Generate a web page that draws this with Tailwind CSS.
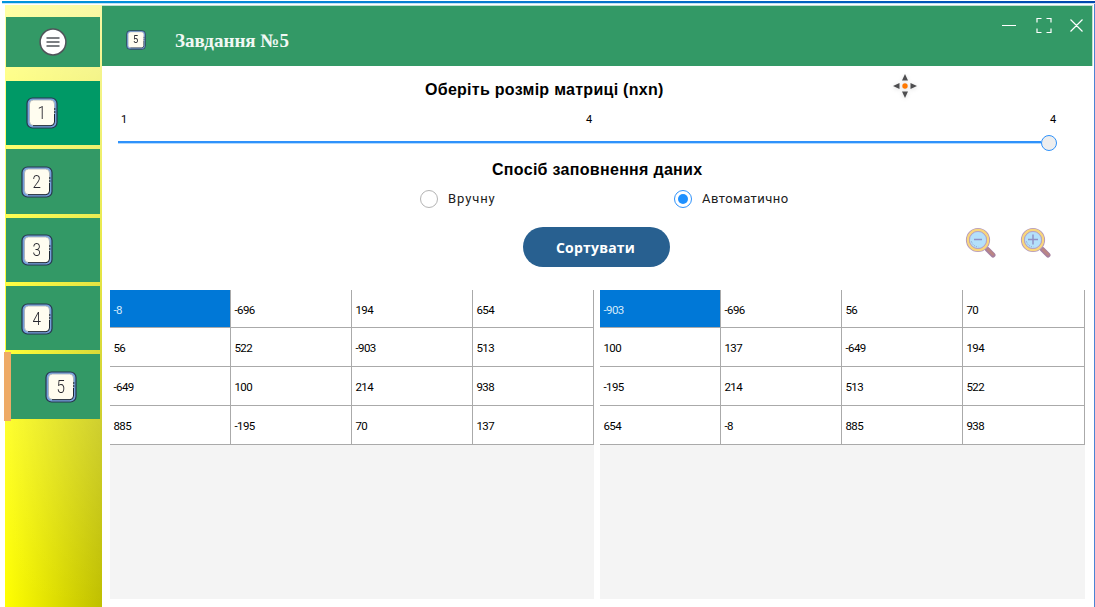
<!DOCTYPE html>
<html lang="uk">
<head>
<meta charset="utf-8">
<title>Завдання №5</title>
<script src="https://cdn.jsdelivr.net/npm/@tailwindcss/browser@4"></script>
</head>
<body class="w-[1095px] h-[607px] overflow-hidden bg-white font-['Roboto',sans-serif] text-black">
<svg class="hidden">
  <symbol id="key" viewBox="0 0 32 32">
    <rect x="1" y="1" width="30" height="30" rx="5.5" fill="#75a0dc" stroke="#27374d" stroke-width="1.2"/>
    <rect x="3.500" y="3" width="25" height="25.5" rx="4" fill="#fffdf0" stroke="#a4adb4" stroke-width=".8"/>
    <path d="M7 28.7h18q3.300-.3 3.500-3.500V17" fill="none" stroke="#1c2631" stroke-width="1"/>
    <path d="M28.800 11v6" stroke="#1c2631" stroke-width="1" stroke-dasharray="2 1"/>
  </symbol>
  <symbol id="lens" viewBox="0 0 32 32">
    <path d="M20.5 20.5l2.500 2.500" stroke="#9a7fae" stroke-width="3"/>
    <path d="M22.500 22.500l5.500 5.500" stroke="#a680a0" stroke-width="5" stroke-linecap="round"/>
    <path d="M23 22.500l5 5" stroke="#bb8583" stroke-width="2.500" stroke-linecap="round"/>
    <circle cx="13" cy="13" r="10.300" fill="#b4e0fa" stroke="#b297bf" stroke-width="3.600"/>
    <circle cx="13" cy="13" r="10.100" fill="none" stroke="#f8d67c" stroke-width="2.200"/>
    <circle cx="13" cy="13" r="8.500" fill="none" stroke="#b097c0" stroke-width=".6"/>
    <path d="M6.500 14.500q1.500 5 7 5.500" fill="none" stroke="#8499c6" stroke-dasharray="1 1.300"/>
  </symbol>
</svg>
<div class="flex flex-col h-full ml-0.5 pt-px">
  <div class="h-[2px] shrink-0 bg-linear-to-r from-[#0095dc] via-[#0878cc] to-[#0047ac]"></div>
  <div class="h-px shrink-0 bg-[#c5e3f5]"></div>
  <div class="flex flex-1 min-h-0 pl-[3px] pt-px border-r border-[#4c83d3]">
    <nav class="w-[97px] shrink-0 flex flex-col bg-[linear-gradient(to_bottom,rgba(255,255,185,0.9),rgba(255,255,110,0.65)_40%,rgba(255,255,200,0.23)_70%,rgba(255,255,0,0)),linear-gradient(to_right,#ffff00,#bfbf00)] pt-3 pl-px pr-0.5">
      <button class="h-[50px] shrink-0 bg-[#339966] flex items-center justify-center">
        <svg class="size-7" viewBox="0 0 28 28"><circle cx="14" cy="14" r="12.900" fill="#fff" stroke="#50545a" stroke-width="1.500"/><path d="M7.500 10h13M7.500 14h13M7.500 18h13" stroke="#50545a" stroke-width="1.500"/></svg>
      </button>
      <button class="mt-3.5 h-16 shrink-0 bg-[#009966] flex items-center pl-5">
        <span class="relative size-8"><svg class="size-8"><use href="#key"/></svg><span class="absolute inset-0 pr-px text-center leading-[31px] text-[19px] font-light text-[#292930] scale-x-80">1</span></span>
      </button>
      <button class="mt-1 h-[65px] shrink-0 bg-[#339966] flex items-center pl-[15px]">
        <span class="relative size-8"><svg class="size-8"><use href="#key"/></svg><span class="absolute inset-0 pr-px text-center leading-[31px] text-[19px] font-light text-[#292930] scale-x-80">2</span></span>
      </button>
      <button class="mt-1 h-[64px] shrink-0 bg-[#339966] flex items-center pl-[15px]">
        <span class="relative size-8"><svg class="size-8"><use href="#key"/></svg><span class="absolute inset-0 pr-px text-center leading-[31px] text-[19px] font-light text-[#292930] scale-x-80">3</span></span>
      </button>
      <button class="mt-1 h-[64px] shrink-0 bg-[#339966] flex items-center pl-[15px] pt-px">
        <span class="relative size-8"><svg class="size-8"><use href="#key"/></svg><span class="absolute inset-0 pr-px text-center leading-[31px] text-[19px] font-light text-[#292930] scale-x-80">4</span></span>
      </button>
      <div class="mt-0.5 -ml-[2px] h-[69px] shrink-0 flex">
        <span class="w-[7px] bg-[#eeaa66]"></span>
        <button class="mt-0.5 h-[65px] flex-1 bg-[#339966] flex items-center pl-[34px]">
          <span class="relative size-8"><svg class="size-8"><use href="#key"/></svg><span class="absolute inset-0 pr-px text-center leading-[31px] text-[19px] font-light text-[#292930] scale-x-80">5</span></span>
        </button>
      </div>
    </nav>
    <main class="flex-1 flex flex-col min-w-0 pr-px">
      <header class="h-[61px] shrink-0 bg-[#339966] border-t border-r border-[#c4dfcf] flex items-start text-white">
        <span class="relative size-5 ml-6 mt-[24px]"><svg class="size-5"><use href="#key"/></svg><span class="absolute inset-0 pr-px text-center leading-[19px] text-[11px] text-[#292930] scale-x-85">5</span></span>
        <h1 class="ml-[29px] mt-[23px] w-[114px] whitespace-nowrap font-['Liberation_Serif',serif] font-bold text-[19px] leading-6 text-[#f1f8f4]">Завдання №5</h1>
        <svg class="ml-auto mr-[8px] mt-[9px] w-[84px] h-5" viewBox="0 0 84 20" fill="none" stroke="#fff" stroke-width="1.200"><path d="M2 10.500h14M37 7.500V3.500h4.500M46.500 3.500H51v4M51 13.500v4h-4.500M41.500 17.500H37v-4M70.500 4.500l12 12M82.500 4.500l-12 12"/></svg>
      </header>
      <section class="h-[224px] shrink-0 flex flex-col">
        <div class="relative h-[48px] flex items-start">
          <h2 class="ml-[323px] mt-[12px] whitespace-nowrap font-['Liberation_Sans',sans-serif] font-bold text-base leading-6 tracking-[0.28px]">Оберіть розмір матриці (nxn)</h2>
          <svg class="absolute left-[789px] top-[6px] size-7 drop-shadow-sm" viewBox="0 0 28 28"><path d="M14 2l3 6.500h-6zM14 26l3-6.500h-6zM2 14l6.500-3v6zM26 14l-6.500-3v6z" fill="#4e4e50"/><circle cx="14" cy="14" r="2.700" fill="#ff7800"/></svg>
        </div>
        <div class="h-3 flex text-[11px] leading-3"><span class="ml-[19px] w-[465px]">1</span><span class="w-[464px]">4</span><span>4</span></div>
        <div class="h-[33px] ml-4 mr-9 flex items-center"><span class="h-[2px] flex-1 bg-[#2f92fb] border-b border-[#b4dafd] box-content"></span><span class="size-4 rounded-full bg-[#eeeeee] border-[1.5px] border-[#2f92fb]"></span></div>
        <h2 class="ml-[390px] -mt-px whitespace-nowrap font-['Liberation_Sans',sans-serif] font-bold text-base leading-6 tracking-[0.3px]">Спосіб заповнення даних</h2>
        <div class="h-[33px] flex items-center ml-[318px] text-[13px] text-[#202020]">
          <span class="size-[18px] rounded-full border border-[#b4b4b4]"></span><span class="ml-2.5 w-[226px] tracking-[0.9px]">Вручну</span>
          <span class="size-[18px] rounded-full border border-[#2f92fb] flex items-center justify-center"><span class="size-2.5 rounded-full bg-[#1e90ff]"></span></span><span class="ml-2.5 tracking-[0.45px]">Автоматично</span>
        </div>
        <div class="flex items-start mt-3">
          <button class="ml-[421px] w-[147px] h-10 rounded-full bg-[#286090] text-white font-['Open_Sans',sans-serif] font-bold text-sm tracking-[0.2px] pr-0.5 pt-px">Сортувати</button>
          <svg class="ml-[295px] mt-0 size-8"><use href="#lens"/><path d="M9 12.500h8" stroke="#8f91c5" stroke-width="1.500"/></svg>
          <svg class="ml-[23px] mt-0 size-8"><use href="#lens"/><path d="M8 12.500h10M13 7.500v10" stroke="#8f91c5" stroke-width="1.500"/></svg>
        </div>
      </section>
      <section class="h-[309px] shrink-0 flex gap-1.5 ml-2">
        <div class="w-[484px] bg-[#f4f4f4]">
          <div class="grid grid-cols-[121px_121px_121px_121px] grid-rows-[38px_39px_39px_39px] text-[11.5px] leading-[40px] tracking-[-0.6px] *:pl-[3.500px] *:bg-white *:border-r *:border-b *:border-[#aaaaaa]">
            <span class="bg-[#0078d7]! text-[#d5eafb]">-8</span><span>-696</span><span>194</span><span>654</span>
            <span>56</span><span>522</span><span>-903</span><span>513</span>
            <span>-649</span><span>100</span><span>214</span><span>938</span>
            <span>885</span><span>-195</span><span>70</span><span>137</span>
          </div>
        </div>
        <div class="w-[485px] bg-[#f4f4f4]">
          <div class="grid grid-cols-[121px_121px_121px_122px] grid-rows-[38px_39px_39px_39px] text-[11.5px] leading-[40px] tracking-[-0.6px] *:pl-[3.500px] *:bg-white *:border-r *:border-b *:border-[#aaaaaa]">
            <span class="bg-[#0078d7]! text-[#d5eafb]">-903</span><span>-696</span><span>56</span><span>70</span>
            <span>100</span><span>137</span><span>-649</span><span>194</span>
            <span>-195</span><span>214</span><span>513</span><span>522</span>
            <span>654</span><span>-8</span><span>885</span><span>938</span>
          </div>
        </div>
      </section>
    </main>
  </div>
</div>
</body>
</html>
